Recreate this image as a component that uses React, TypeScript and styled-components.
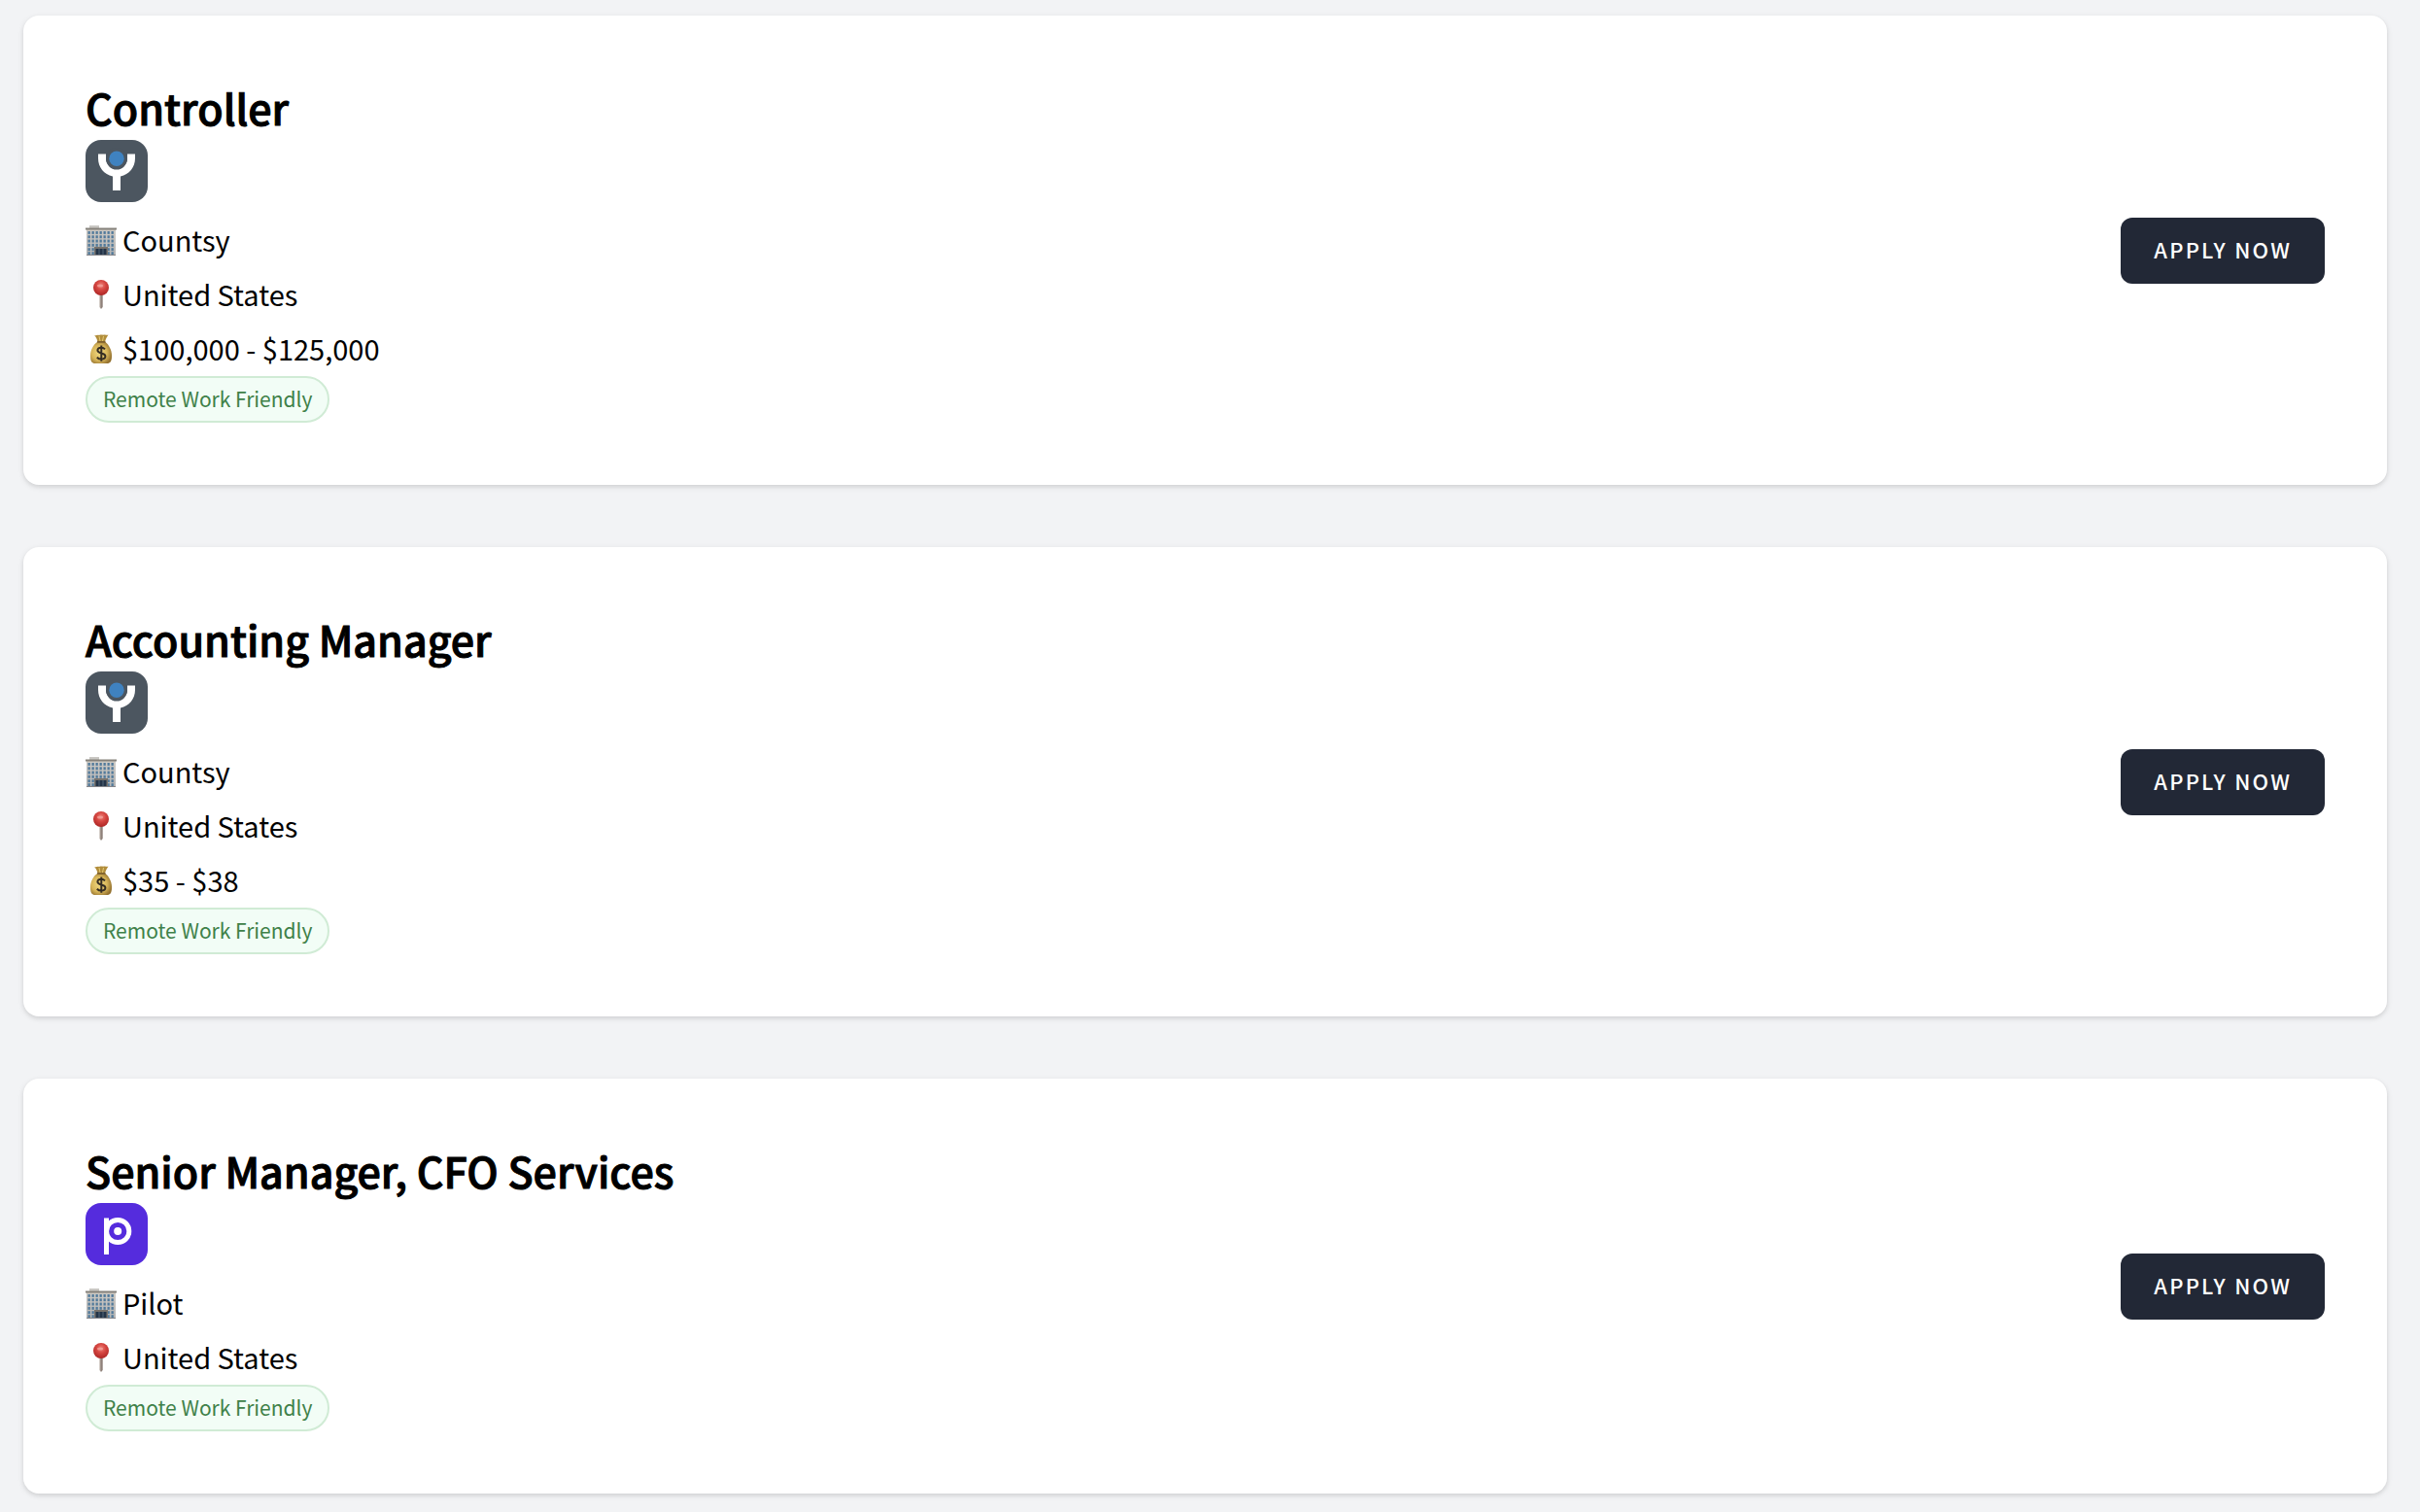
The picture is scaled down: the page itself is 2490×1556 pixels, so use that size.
import React from "react";
import styled, { createGlobalStyle } from "styled-components";

const GlobalStyle = createGlobalStyle`
  *, *::before, *::after { box-sizing: border-box; }
  body {
    margin: 0;
    background: #f2f3f5;
    color: #000;
    font-family: "Noto Sans CJK SC", "Noto Sans", sans-serif;
  }
`;

const JobList = styled.ul`
  display: flex;
  flex-direction: column;
  gap: 64px;
  margin: 0;
  padding: 16px 34px 16px 24px;
  list-style: none;
`;

const Card = styled.li`
  display: flex;
  align-items: center;
  justify-content: space-between;
  gap: 64px;
  padding: 64px;
  border-radius: 16px;
  background: #fff;
  box-shadow: 0 2px 6px rgba(0, 0, 0, 0.1), 0 2px 4px rgba(0, 0, 0, 0.06);
`;

const Details = styled.div`
  display: flex;
  flex-direction: column;
  align-items: flex-start;
`;

const Title = styled.h2`
  margin: 0 0 4px;
  font-size: 43px;
  font-weight: 500;
  line-height: 60px;
  -webkit-text-stroke: 1px currentColor;
`;

const Logo = styled.svg`
  display: block;
  width: 64px;
  height: 64px;
  margin-bottom: 11px;
  border-radius: 16px;
`;

const Fact = styled.p`
  display: flex;
  align-items: center;
  gap: 6px;
  margin: 0;
  padding-bottom: 2px;
  font-size: 29px;
  line-height: 54px;
`;

const Emoji = styled.svg`
  display: block;
  width: 32px;
  height: 36px;
`;

const Badge = styled.span`
  padding: 0 16px 2px;
  border: 2px solid #d0ebd5;
  border-radius: 24px;
  background: #f2fdf6;
  color: #3f8149;
  font-size: 21px;
  line-height: 42px;
`;

const ApplyButton = styled.button`
  flex-shrink: 0;
  padding: 0 34px 4px;
  border: 0;
  border-radius: 12px;
  background: #222836;
  color: #fff;
  font-family: inherit;
  font-size: 22px;
  font-weight: 500;
  line-height: 64px;
  letter-spacing: 0.1em;
  text-transform: uppercase;
  cursor: pointer;
`;

function CountsyLogo() {
  return (
    <Logo viewBox="0 0 64 64" role="img" aria-label="Countsy logo">
      <rect width="64" height="64" fill="#4c5660" />
      <path d="M13 14.500H21V19a11 11.500 0 0 0 22 0V14.500H51V19C51 28 45 35.500 36 37.500V52H28V37.500C19 35.500 13 28 13 19Z" fill="#fff" />
      <circle cx="32" cy="19" r="11" fill="#4c5660" />
      <circle cx="32" cy="19.300" r="7.700" fill="#3f82c0" />
    </Logo>
  );
}

function PilotLogo() {
  return (
    <Logo viewBox="0 0 64 64" role="img" aria-label="Pilot logo">
      <rect width="64" height="64" fill="#552cdd" />
      <rect x="19" y="15.500" width="5" height="37.500" fill="#fff" />
      <circle cx="33.200" cy="29" r="11.600" fill="none" stroke="#fff" strokeWidth="5" />
      <circle cx="33.200" cy="29" r="4" fill="#fff" />
    </Logo>
  );
}

function OfficeEmoji() {
  const columns = [2.5, 6.5, 10.5, 14.5, 18.5, 22.5, 26.5];
  const rows = [6, 10.3, 14.6, 18.9, 23.2, 27.2];
  return (
    <Emoji viewBox="0 -4 32 36" aria-hidden="true">
      <defs>
        <linearGradient id="wall" x1="0" y1="0" x2="0" y2="1">
          <stop offset="0" stopColor="#cfcbc5" />
          <stop offset="1" stopColor="#b4b4b4" />
        </linearGradient>
      </defs>
      <rect x="4" y="0" width="10" height="3" fill="#c9c7c3" />
      <rect x="1" y="3" width="30" height="28" fill="url(#wall)" />
      <rect x="0" y="2.500" width="32" height="2" fill="#85817b" />
      {rows.map((y) =>
        columns.map((x) => (
          <rect key={`${x}-${y}`} x={x} y={y} width="2.300" height="2.900" fill="#527a9b" />
        ))
      )}
      <rect x="9" y="22" width="14" height="9" fill="#77726c" />
      <rect x="10.500" y="24" width="11" height="7" fill="#243448" />
      <path d="M14 24V31M18 24V31" stroke="#5f7385" strokeWidth="0.800" />
      <rect x="1" y="30" width="30" height="1" fill="#85858a" />
    </Emoji>
  );
}

function PinEmoji() {
  return (
    <Emoji viewBox="0 -4 32 36" aria-hidden="true">
      <defs>
        <radialGradient id="pinHead" cx="0.5" cy="0.350" r="0.650">
          <stop offset="0" stopColor="#ee8178" />
          <stop offset="0.450" stopColor="#d64742" />
          <stop offset="1" stopColor="#ad2524" />
        </radialGradient>
        <linearGradient id="pinStem" x1="0" x2="1">
          <stop offset="0" stopColor="#b9aea6" />
          <stop offset="1" stopColor="#796a63" />
        </linearGradient>
      </defs>
      <path d="M14.400 14H17.600V28L16 30L14.400 28Z" fill="url(#pinStem)" />
      <circle cx="16" cy="8" r="8" fill="url(#pinHead)" />
      <ellipse cx="15" cy="6" rx="3" ry="1.500" fill="#f5aaa3" opacity="0.700" />
    </Emoji>
  );
}

function MoneyBagEmoji() {
  return (
    <Emoji viewBox="0 -4 32 36" aria-hidden="true">
      <defs>
        <radialGradient id="bag" cx="0.420" cy="0.500" r="0.600">
          <stop offset="0" stopColor="#f0d880" />
          <stop offset="0.600" stopColor="#d8b65a" />
          <stop offset="1" stopColor="#94712e" />
        </radialGradient>
      </defs>
      <path d="M9 1C11 2 12 0 14 1C16 0 18 1 19 0.500C21 0 22 1.500 23.500 0.500C22 3 20.500 5 20 8H12.500C12 5 11 3 9 1Z" fill="#b18d3b" />
      <path d="M14 2L15 7M18.500 2L17.500 7" stroke="#e6cb74" strokeWidth="1" />
      <path d="M12 8H20.500C24 11 27 16 27 22C27 28 25.500 30 22 30H10C6.500 30 5 28 5 22C5 16 8 11 12 8Z" fill="url(#bag)" />
      <path d="M12 7.900H20.500" stroke="#76592a" strokeWidth="1.500" />
      <path d="M20 15.300C19 14.200 17.700 13.700 16.200 13.700C13.900 13.700 12.400 14.800 12.400 16.600C12.400 20.500 20.400 18.300 20.400 22.500C20.400 24.500 18.700 25.600 16.300 25.600C14.500 25.600 12.900 24.900 11.800 23.700M16.300 11.500V27.700" fill="none" stroke="#352d23" strokeWidth="2" />
    </Emoji>
  );
}

interface Job {
  title: string;
  company: string;
  logo: () => React.JSX.Element;
  location: string;
  salary?: string;
}

const jobs: Job[] = [
  {
    title: "Controller",
    company: "Countsy",
    logo: CountsyLogo,
    location: "United States",
    salary: "$100,000 - $125,000",
  },
  {
    title: "Accounting Manager",
    company: "Countsy",
    logo: CountsyLogo,
    location: "United States",
    salary: "$35 - $38",
  },
  {
    title: "Senior Manager, CFO Services",
    company: "Pilot",
    logo: PilotLogo,
    location: "United States",
  },
];

function JobCard({ job }: { job: Job }) {
  const CompanyLogo = job.logo;
  return (
    <Card>
      <Details>
        <Title>{job.title}</Title>
        <CompanyLogo />
        <Fact>
          <OfficeEmoji />
          {job.company}
        </Fact>
        <Fact>
          <PinEmoji />
          {job.location}
        </Fact>
        {job.salary && (
          <Fact>
            <MoneyBagEmoji />
            {job.salary}
          </Fact>
        )}
        <Badge>Remote Work Friendly</Badge>
      </Details>
      <ApplyButton type="button">Apply now</ApplyButton>
    </Card>
  );
}

export default function App() {
  return (
    <>
      <GlobalStyle />
      <main>
        <JobList>
          {jobs.map((job) => (
            <JobCard key={job.title} job={job} />
          ))}
        </JobList>
      </main>
    </>
  );
}
